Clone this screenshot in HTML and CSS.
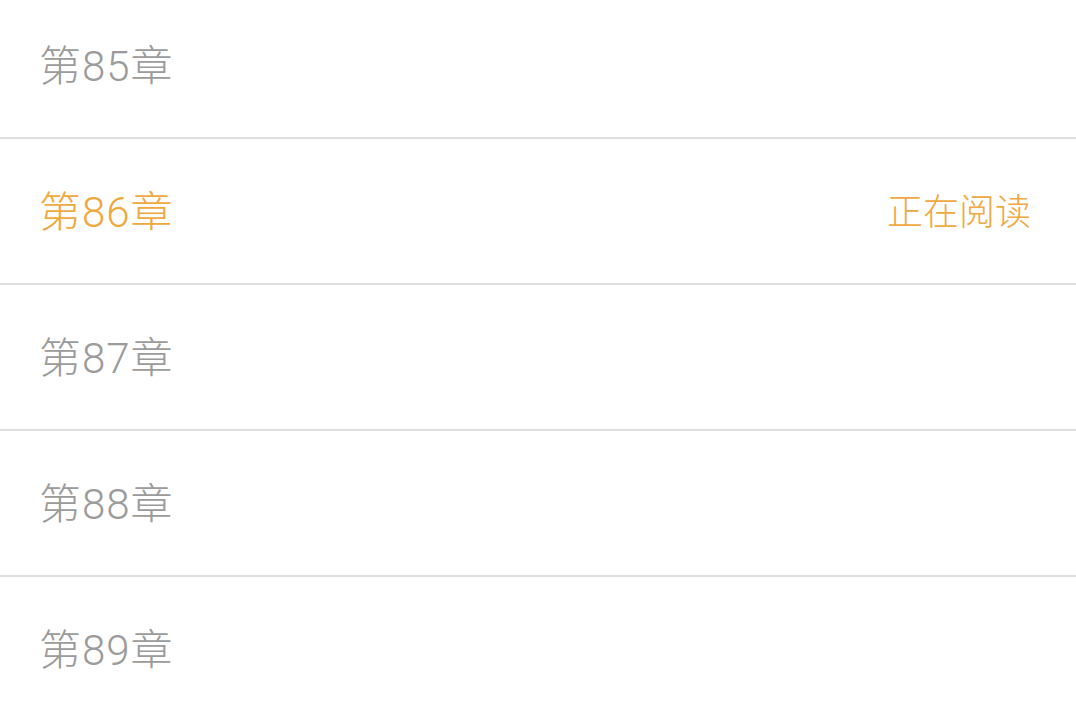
FILE: index.html
```html
<!DOCTYPE html>
<html lang="zh-CN">
<head>
<meta charset="utf-8">
<title>目录</title>
<link rel="stylesheet" href="styles.css">
</head>
<body>
<ul class="chapters">
  <li class="chapter"><span class="title">第85章</span></li>
  <li class="chapter current"><span class="title">第86章</span><span class="status">正在阅读</span></li>
  <li class="chapter"><span class="title">第87章</span></li>
  <li class="chapter"><span class="title">第88章</span></li>
  <li class="chapter"><span class="title">第89章</span></li>
</ul>
</body>
</html>
```
FILE: styles.css
```css
html, body {
  margin: 0;
  padding: 0;
  background: #ffffff;
  overflow: hidden;
}
body {
  font-family: "Roboto", "Noto Sans CJK SC", sans-serif;
}
.chapters {
  list-style: none;
  margin: -7px 0 0 0;
  padding: 0;
}
.chapter {
  border-bottom: 2px solid #dedede;
  display: flex;
  align-items: center;
  justify-content: space-between;
  padding: 3px 45px 0 39px;
  box-sizing: border-box;
  height: 146px;
  color: #9b9b9b;
}
.title {
  font-size: 42px;
  font-weight: 300;
  letter-spacing: 1px;
  line-height: 1;
}
.current {
  color: #f0a840;
}
.status {
  font-size: 36px;
  font-weight: 300;
  line-height: 1;
}
```
